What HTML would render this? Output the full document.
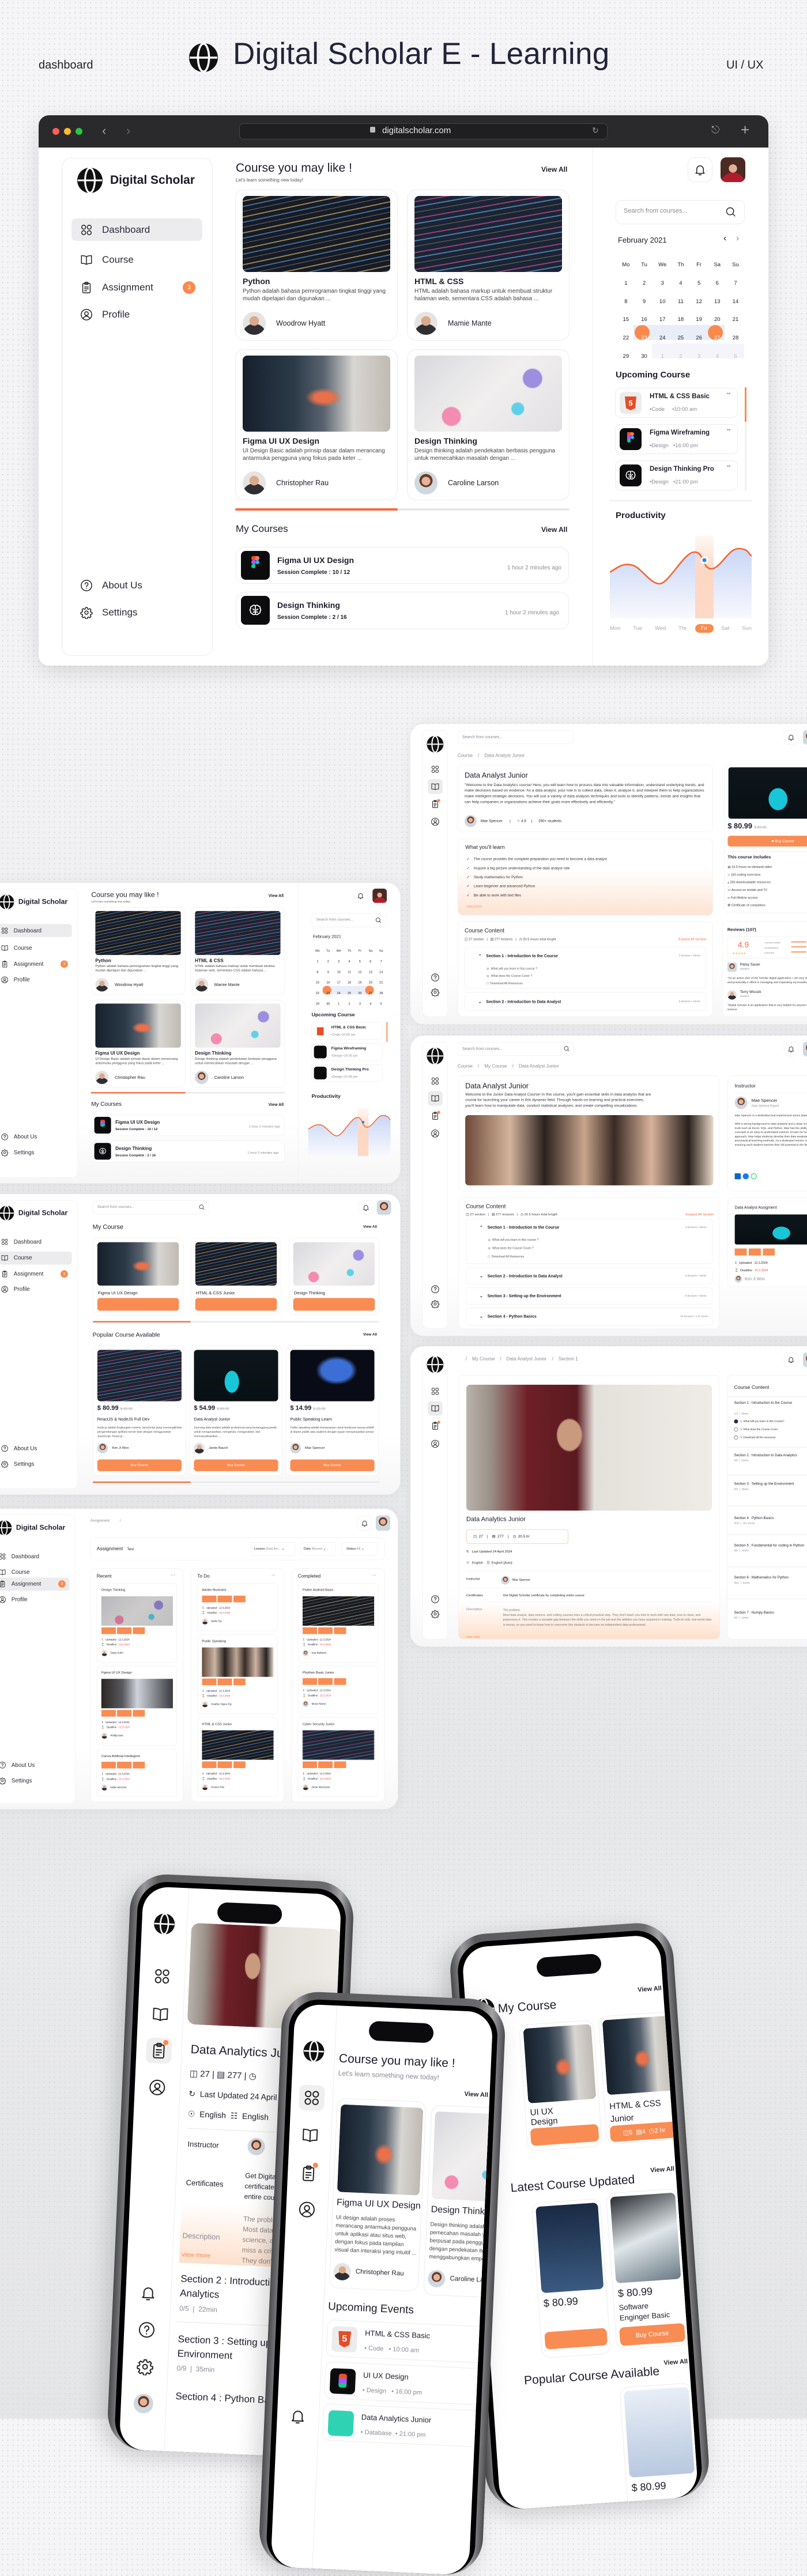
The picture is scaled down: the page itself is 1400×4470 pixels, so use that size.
<!DOCTYPE html>
<html><head><meta charset="utf-8">
<style>
*{box-sizing:border-box;margin:0;padding:0}
body{width:1400px;height:4197px;overflow:hidden;position:relative;font-family:"Liberation Sans",sans-serif;color:#1d1d2b;
background:radial-gradient(circle,#d9dadd 1px,transparent 1.3px) 0 0/9px 9px,linear-gradient(180deg,#f5f5f7 0,#f3f3f5 1200px,#ebebed 2000px,#e6e7e9 3100px,#e9eaec 3300px,#e4e5e7 4197px)}
.a{position:absolute}
.scr{position:absolute;width:1266px;height:899px;background:linear-gradient(180deg,#fff 0,#fff 80%,#f6f6f7 100%);border-radius:40px;overflow:hidden;transform:scale(.58);transform-origin:0 0;box-shadow:0 0 40px rgba(0,0,0,.06)}
.card{position:absolute;border:1.5px solid #ececef;border-radius:16px;background:#fff}
svg.i{position:absolute;fill:none;stroke:#222;stroke-width:1.6;stroke-linecap:round;stroke-linejoin:round}
.nav{position:absolute;font-size:17px;color:#2a2a36}
.code{background:repeating-linear-gradient(168deg,transparent 0 8px,rgba(240,200,110,.6) 8px 10px,transparent 10px 17px,rgba(110,190,255,.5) 17px 19px,transparent 19px 26px,rgba(255,255,255,.35) 26px 27px),#161b26}
.code2{background:repeating-linear-gradient(170deg,transparent 0 9px,rgba(230,90,150,.6) 9px 11px,transparent 11px 18px,rgba(120,200,255,.55) 18px 20px,transparent 20px 28px,rgba(240,230,120,.4) 28px 29px),#1b2436}
.ux{background:radial-gradient(ellipse at 55% 55%,#e8704a 0 8%,transparent 16%),linear-gradient(90deg,#16202c 0,#2c3a48 35%,#5a6470 55%,#d8d6d2 75%,#bfbab2 100%)}
.dt{background:radial-gradient(circle at 80% 30%,#9d8ee0 0 7%,transparent 8%),radial-gradient(circle at 25% 80%,#f48bb0 0 7%,transparent 8%),radial-gradient(circle at 70% 70%,#5fd0e8 0 5%,transparent 6%),linear-gradient(135deg,#d8d8de,#f1efee 50%,#e2e0e4)}
.chart{background:radial-gradient(ellipse 14% 35% at 45% 62%,#18c6d8 0 60%,transparent 62%),linear-gradient(180deg,#0d161b,#081014)}
.ppl{background:linear-gradient(90deg,#6d4a38 0,#d4b49c 18%,#2b221e 32%,#c9a48c 48%,#3a2a24 60%,#d8b29a 75%,#2a201c 90%,#e8d8c8 100%)}
.man{background:radial-gradient(ellipse 12% 30% at 42% 40%,#c99a7e 0 40%,transparent 45%),linear-gradient(90deg,#b9b3ab 0,#9a9088 10%,#6e1f26 25%,#5a1a20 45%,#e4e0da 52%,#efebe6 100%)}
.spk{background:radial-gradient(ellipse 35% 40% at 55% 40%,#3c6fd6 0 50%,transparent 70%),#090c16}
.av{position:absolute;border-radius:50%;background:radial-gradient(circle at 50% 40%,#d9a98a 0 26%,transparent 27%),radial-gradient(circle at 50% 105%,#2e2e33 0 45%,transparent 46%),#e6e3e0}
.avf{position:absolute;border-radius:50%;background:radial-gradient(circle at 50% 42%,#e3b49a 0 24%,transparent 25%),radial-gradient(circle at 50% 40%,#6a3a26 0 36%,transparent 37%),#cfd8de}
.btn{position:absolute;background:#f98c52;border-radius:8px;color:#fff;text-align:center}
.g{color:#8a8a96}
.phone{position:absolute;width:388px;height:1000px;border-radius:64px;background:linear-gradient(90deg,#4a4a4d,#9a9a9e 6%,#5b5b5e 12%,#6b6b6e 88%,#a5a5a8 94%,#4a4a4d);padding:13px;box-shadow:-10px 10px 40px rgba(0,0,0,.18)}
.phone .in{position:absolute;left:13px;top:13px;right:13px;bottom:0;background:#000;border-radius:52px;padding:9px}
.phone .sc{position:absolute;left:9px;top:9px;right:9px;bottom:0;background:#fff;border-radius:44px;overflow:hidden}
.notch{position:absolute;width:112px;height:34px;background:#0b0b0d;border-radius:18px}
</style></head><body>
<svg width="0" height="0" style="position:absolute">
<defs>
<symbol id="globe" viewBox="0 0 24 24"><circle cx="12" cy="12" r="12" fill="#111" stroke="none"/><ellipse cx="12" cy="12" rx="4.6" ry="11.6" fill="none" stroke="#fff" stroke-width="1.7"/><path d="M0.5 12H23.5" stroke="#fff" stroke-width="1.7"/></symbol>
<symbol id="grid" viewBox="0 0 24 24"><rect x="3" y="3" width="7.5" height="7.5" rx="3.7"/><rect x="13.5" y="3" width="7.5" height="7.5" rx="3.7"/><rect x="3" y="13.5" width="7.5" height="7.5" rx="3.7"/><rect x="13.5" y="13.5" width="7.5" height="7.5" rx="3.7"/></symbol>
<symbol id="book" viewBox="0 0 24 24"><path d="M12 6C10 4.6 7 4 2.5 4v14.5c4.5 0 7.5.5 9.5 2 2-1.5 5-2 9.5-2V4C17 4 14 4.6 12 6zM12 6v14.5"/></symbol>
<symbol id="clip" viewBox="0 0 24 24"><rect x="5" y="4" width="14" height="18" rx="2"/><rect x="9" y="2" width="6" height="4" rx="1"/><path d="M8.5 11h7M8.5 14.5h7M8.5 18h4"/></symbol>
<symbol id="user" viewBox="0 0 24 24"><circle cx="12" cy="12" r="10"/><circle cx="12" cy="10" r="3.5"/><path d="M5.8 19.2c1.6-2.8 3.8-4.2 6.2-4.2s4.6 1.4 6.2 4.2"/></symbol>
<symbol id="help" viewBox="0 0 24 24"><circle cx="12" cy="12" r="10"/><path d="M9.3 9.4a2.8 2.8 0 1 1 3.9 2.6c-.8.4-1.2 1-1.2 1.8v.7"/><path d="M12 17.4v.2"/></symbol>
<symbol id="gear" viewBox="0 0 24 24"><path d="M10.3 2.5h3.4l.5 2.6 1.9.8 2.2-1.5 2.4 2.4-1.5 2.2.8 1.9 2.6.5v3.4l-2.6.5-.8 1.9 1.5 2.2-2.4 2.4-2.2-1.5-1.9.8-.5 2.6h-3.4l-.5-2.6-1.9-.8-2.2 1.5-2.4-2.4 1.5-2.2-.8-1.9-2.6-.5v-3.4l2.6-.5.8-1.9-1.5-2.2 2.4-2.4 2.2 1.5 1.9-.8z"/><circle cx="12" cy="12" r="3.2"/></symbol>
<symbol id="bell" viewBox="0 0 24 24"><path d="M6 16.5V11a6 6 0 0 1 12 0v5.5l1.6 2H4.4zM10 21.2h4"/></symbol>
<symbol id="search" viewBox="0 0 24 24"><circle cx="11" cy="11" r="7"/><path d="M16.2 16.2L20.5 20.5"/></symbol>
<symbol id="brain" viewBox="0 0 24 24"><path d="M12 5c-1-1.5-4-1.6-5 .4-2 0-3.3 2-2.4 3.6C3 10 3 12.8 4.6 13.8c-.6 1.8.8 3.7 2.6 3.5.6 1.9 3.5 2.2 4.8.7 1.3 1.5 4.2 1.2 4.8-.7 1.8.2 3.2-1.7 2.6-3.5 1.6-1 1.6-3.8 0-4.8.9-1.6-.4-3.6-2.4-3.6-1-2-4-1.9-5-.4zM12 5v13M8 10c1 .3 2 1 2 2M16 10c-1 .3-2 1-2 2M8.5 15c1-.3 2-.3 3.5 0M15.5 15c-1-.3-2-.3-3.5 0"/></symbol>
</defs></svg>

<!-- Header -->
<div class="a" style="left:67px;top:102px;font-size:20px;color:#222">dashboard</div>
<svg class="a" style="left:328px;top:75px;width:50px;height:50px"><use href="#globe"/></svg>
<div class="a" style="left:404px;top:63px;font-size:53px;color:#23233a;letter-spacing:0.3px">Digital Scholar E - Learning</div>
<div class="a" style="left:1260px;top:102px;font-size:20px;color:#222">UI / UX</div>

<!-- Browser -->
<div class="a" style="left:67px;top:200px;width:1266px;height:955px;border-radius:18px;overflow:hidden;background:#fff;box-shadow:0 10px 40px rgba(0,0,0,.12)">
 <div class="a" style="left:0;top:0;width:1266px;height:56px;background:#2a2a2c"></div>
 <div class="a" style="left:24px;top:22px;width:12px;height:12px;border-radius:50%;background:#ff5f57"></div>
 <div class="a" style="left:44px;top:22px;width:12px;height:12px;border-radius:50%;background:#febc2e"></div>
 <div class="a" style="left:64px;top:22px;width:12px;height:12px;border-radius:50%;background:#28c840"></div>
 <div class="a" style="left:110px;top:14px;color:#aaa;font-size:22px">&#8249;</div>
 <div class="a" style="left:152px;top:14px;color:#666;font-size:22px">&#8250;</div>
 <div class="a" style="left:348px;top:14px;width:639px;height:28px;border-radius:7px;background:#1f1f21;border:1px solid #444"></div>
 <div class="a" style="left:575px;top:20px;width:9px;height:10px;background:#bbb;border-radius:2px"></div>
 <div class="a" style="left:596px;top:18px;color:#e8e8e8;font-size:15px">digitalscholar.com</div>
 <div class="a" style="left:960px;top:18px;color:#999;font-size:14px">&#8635;</div>
 <div class="a" style="left:1167px;top:15px;color:#999;font-size:18px">&#9099;</div>
 <div class="a" style="left:1218px;top:10px;color:#aaa;font-size:26px">+</div>
 <div class="a" style="left:0;top:56px;width:1266px;height:899px">
  <!-- DASH -->
  <div class="a" style="left:0;top:0;width:1266px;height:899px">
   <div class="card" style="left:40px;top:18px;width:262px;height:864px"></div>
   <svg class="a" style="left:67px;top:35px;width:44px;height:44px"><use href="#globe"/></svg>
   <div class="a" style="left:124px;top:45px;font-size:21px;font-weight:bold;color:#1a1a26">Digital Scholar</div>
   <div class="a" style="left:57px;top:123px;width:227px;height:39px;background:#ececee;border-radius:8px"></div>
   <svg class="i" style="left:72px;top:132px;width:22px;height:22px"><use href="#grid"/></svg><div class="nav" style="left:110px;top:133px">Dashboard</div>
   <svg class="i" style="left:72px;top:184px;width:22px;height:22px"><use href="#book"/></svg><div class="nav" style="left:110px;top:185px">Course</div>
   <svg class="i" style="left:72px;top:232px;width:22px;height:22px"><use href="#clip"/></svg><div class="nav" style="left:110px;top:233px">Assignment</div>
   <div class="a" style="left:250px;top:232px;width:22px;height:22px;border-radius:50%;background:#fa8a4c;color:#fff;font-size:11px;text-align:center;line-height:22px">3</div>
   <svg class="i" style="left:72px;top:279px;width:22px;height:22px"><use href="#user"/></svg><div class="nav" style="left:110px;top:280px">Profile</div>
   <svg class="i" style="left:72px;top:749px;width:22px;height:22px"><use href="#help"/></svg><div class="nav" style="left:110px;top:750px">About Us</div>
   <svg class="i" style="left:72px;top:796px;width:22px;height:22px"><use href="#gear"/></svg><div class="nav" style="left:110px;top:797px">Settings</div>

   <div class="a" style="left:342px;top:24px;font-size:21px">Course you may like !</div>
   <div class="a g" style="left:342px;top:52px;font-size:8px;color:#555">Let's learn something new today!</div>
   <div class="a" style="left:872px;top:31px;font-size:12px;font-weight:bold">View All</div>

   <div class="card" style="left:341px;top:73px;width:282px;height:262px">
    <div class="a code" style="left:12px;top:10px;width:256px;height:132px;border-radius:8px"></div>
    <div class="a" style="left:12px;top:150px;font-size:14px;font-weight:bold">Python</div>
    <div class="a" style="left:12px;top:169px;width:258px;font-size:10px;line-height:13px;color:#444">Python adalah bahasa pemrograman tingkat tinggi yang mudah dipelajari dan digunakan ...</div>
    <div class="av" style="left:12px;top:211px;width:40px;height:40px"></div>
    <div class="a" style="left:70px;top:224px;font-size:12.5px">Woodrow Hyatt</div>
   </div>
   <div class="card" style="left:639px;top:73px;width:282px;height:262px">
    <div class="a code2" style="left:12px;top:10px;width:256px;height:132px;border-radius:8px"></div>
    <div class="a" style="left:12px;top:150px;font-size:14px;font-weight:bold">HTML &amp; CSS</div>
    <div class="a" style="left:12px;top:169px;width:258px;font-size:10px;line-height:13px;color:#444">HTML adalah bahasa markup untuk membuat struktur halaman web, sementara CSS adalah bahasa ...</div>
    <div class="av" style="left:12px;top:211px;width:40px;height:40px"></div>
    <div class="a" style="left:70px;top:224px;font-size:12.5px">Mamie Mante</div>
   </div>
   <div class="card" style="left:341px;top:350px;width:282px;height:262px">
    <div class="a ux" style="left:12px;top:10px;width:256px;height:132px;border-radius:8px"></div>
    <div class="a" style="left:12px;top:150px;font-size:14px;font-weight:bold">Figma UI UX Design</div>
    <div class="a" style="left:12px;top:169px;width:258px;font-size:10px;line-height:13px;color:#444">UI Design Basic adalah prinsip dasar dalam merancang antarmuka pengguna yang fokus pada keter ...</div>
    <div class="av" style="left:12px;top:211px;width:40px;height:40px"></div>
    <div class="a" style="left:70px;top:224px;font-size:12.5px">Christopher Rau</div>
   </div>
   <div class="card" style="left:639px;top:350px;width:282px;height:262px">
    <div class="a dt" style="left:12px;top:10px;width:256px;height:132px;border-radius:8px"></div>
    <div class="a" style="left:12px;top:150px;font-size:14px;font-weight:bold">Design Thinking</div>
    <div class="a" style="left:12px;top:169px;width:258px;font-size:10px;line-height:13px;color:#444">Design thinking adalah pendekatan berbasis pengguna untuk memecahkan masalah dengan ...</div>
    <div class="avf" style="left:12px;top:211px;width:40px;height:40px"></div>
    <div class="a" style="left:70px;top:224px;font-size:12.5px">Caroline Larson</div>
   </div>
   <div class="a" style="left:341px;top:626px;width:580px;height:4px;background:#e8e8ea;border-radius:2px"></div>
   <div class="a" style="left:341px;top:626px;width:282px;height:4px;background:#f56b3d;border-radius:2px"></div>
   <div class="a" style="left:342px;top:652px;font-size:17px">My Courses</div>
   <div class="a" style="left:872px;top:656px;font-size:12px;font-weight:bold">View All</div>
   <div class="card" style="left:342px;top:693px;width:578px;height:64px">
    <div class="a" style="left:8px;top:6px;width:50px;height:50px;border-radius:8px;background:#0c0c0e"></div>
    <div class="a" style="left:26px;top:15px;width:7px;height:7px;background:#f24e1e;border-radius:3px 0 0 3px"></div><div class="a" style="left:33px;top:15px;width:7px;height:7px;background:#ff7262;border-radius:0 3px 3px 0"></div>
    <div class="a" style="left:26px;top:22px;width:7px;height:7px;background:#a259ff;border-radius:3px 0 0 3px"></div><div class="a" style="left:33px;top:22px;width:7px;height:7px;background:#1abcfe;border-radius:50%"></div>
    <div class="a" style="left:26px;top:29px;width:7px;height:7px;background:#0acf83;border-radius:3px 0 3px 3px"></div>
    <div class="a" style="left:71px;top:14px;font-size:14px;font-weight:bold">Figma UI UX Design</div>
    <div class="a" style="left:71px;top:38px;font-size:10px;font-weight:bold">Session Complete : 10 / 12</div>
    <div class="a g" style="left:470px;top:30px;font-size:10px">1 hour 2 minutes ago</div>
   </div>
   <div class="card" style="left:342px;top:771px;width:578px;height:65px">
    <div class="a" style="left:8px;top:6px;width:50px;height:50px;border-radius:8px;background:#0c0c0e"></div>
    <svg class="i" style="left:20px;top:18px;width:26px;height:26px;stroke:#fff"><use href="#brain"/></svg>
    <div class="a" style="left:71px;top:14px;font-size:14px;font-weight:bold">Design Thinking</div>
    <div class="a" style="left:71px;top:38px;font-size:10px;font-weight:bold">Session Complete : 2 / 16</div>
    <div class="a g" style="left:466px;top:30px;font-size:10px">1 hour 2 minutes ago</div>
   </div>
   <div class="a" style="left:961px;top:0;width:1px;height:899px;background:#eee"></div>
   <div class="card" style="left:1126px;top:17px;width:43px;height:43px;border-radius:12px"></div>
   <svg class="i" style="left:1136px;top:27px;width:23px;height:23px"><use href="#bell"/></svg>
   <div class="avf" style="left:1183px;top:17px;width:43px;height:43px;border-radius:10px;background:radial-gradient(circle at 50% 45%,#e0b098 0 22%,transparent 23%),radial-gradient(circle at 50% 110%,#b11c2c 0 40%,transparent 41%),#4a2a22"></div>
   <div class="card" style="left:1001px;top:91px;width:224px;height:42px;border-radius:10px"></div>
   <div class="a g" style="left:1015px;top:104px;font-size:11px">Search from courses...</div>
   <svg class="i" style="left:1190px;top:101px;width:21px;height:21px"><use href="#search"/></svg>
   <div class="a" style="left:1005px;top:153px;font-size:13px">February 2021</div>
   <div class="a" style="left:1188px;top:149px;font-size:16px">&#8249;</div><div class="a g" style="left:1210px;top:149px;font-size:16px">&#8250;</div>
   <div class="a" style="left:1032px;top:308px;width:158px;height:26px;background:#e9edf8"></div>
   <div class="a" style="left:1064px;top:340px;width:160px;height:26px;background:#f4f5fa"></div>
   <div class="a" style="left:1034px;top:308px;width:26px;height:26px;border-radius:50%;background:#fa8a4c"></div>
   <div class="a" style="left:1161px;top:308px;width:26px;height:26px;border-radius:50%;background:#fa8a4c"></div>
   <div class="a" style="left:1003px;top:188px;width:222px;font-size:9.5px;line-height:31.8px;display:grid;grid-template-columns:repeat(7,31.7px);text-align:center">
    <span>Mo</span><span>Tu</span><span>We</span><span>Th</span><span>Fr</span><span>Sa</span><span>Su</span>
    <span>1</span><span>2</span><span>3</span><span>4</span><span>5</span><span>6</span><span>7</span>
    <span>8</span><span>9</span><span>10</span><span>11</span><span>12</span><span>13</span><span>14</span>
    <span>15</span><span>16</span><span>17</span><span>18</span><span>19</span><span>20</span><span>21</span>
    <span>22</span><span style="color:#fff">23</span><span>24</span><span>25</span><span>26</span><span style="color:#fff">27</span><span>28</span>
    <span>29</span><span>30</span><span style="color:#bbb">1</span><span style="color:#bbb">2</span><span style="color:#bbb">3</span><span style="color:#bbb">4</span><span style="color:#bbb">5</span>
   </div>
   <div class="a" style="left:1001px;top:386px;font-size:15px;font-weight:bold">Upcoming Course</div>
   <div class="a" style="left:1225px;top:416px;width:3px;height:180px;background:#efefef;border-radius:2px"></div>
   <div class="a" style="left:1225px;top:416px;width:3px;height:60px;background:#fa8a4c;border-radius:2px"></div>
   <div class="card" style="left:1000px;top:417px;width:213px;height:52px;border-radius:10px">
    <div class="a" style="left:7px;top:6px;width:38px;height:38px;border-radius:8px;background:#ececec"></div>
    <div class="a" style="left:16px;top:14px;width:20px;height:24px;background:#e44d26;clip-path:polygon(0 0,100% 0,90% 85%,50% 100%,10% 85%);color:#fff;font-size:13px;font-weight:bold;text-align:center;line-height:24px">5</div>
    <div class="a" style="left:59px;top:8px;font-size:11.5px;font-weight:bold">HTML &amp; CSS Basic</div>
    <div class="a g" style="left:59px;top:31px;font-size:9.5px">&bull;Code &nbsp;&nbsp;&nbsp;&nbsp;&bull;10:00 am</div>
    <div class="a g" style="left:193px;top:4px;font-size:9px">&bull;&bull;</div>
   </div>
   <div class="card" style="left:1000px;top:480px;width:213px;height:52px;border-radius:10px">
    <div class="a" style="left:7px;top:6px;width:38px;height:38px;border-radius:8px;background:#0c0c0e"></div>
    <div class="a" style="left:20px;top:13px;width:6px;height:6px;background:#f24e1e"></div><div class="a" style="left:26px;top:13px;width:6px;height:6px;background:#ff7262;border-radius:0 3px 3px 0"></div>
    <div class="a" style="left:20px;top:19px;width:6px;height:6px;background:#a259ff"></div><div class="a" style="left:26px;top:19px;width:6px;height:6px;background:#1abcfe;border-radius:50%"></div>
    <div class="a" style="left:20px;top:25px;width:6px;height:6px;background:#0acf83;border-radius:0 0 3px 3px"></div>
    <div class="a" style="left:59px;top:8px;font-size:11.5px;font-weight:bold">Figma Wireframing</div>
    <div class="a g" style="left:59px;top:31px;font-size:9.5px">&bull;Design &nbsp;&nbsp;&bull;16:00 pm</div>
    <div class="a g" style="left:193px;top:4px;font-size:9px">&bull;&bull;</div>
   </div>
   <div class="card" style="left:1000px;top:543px;width:213px;height:52px;border-radius:10px">
    <div class="a" style="left:7px;top:6px;width:38px;height:38px;border-radius:8px;background:#0c0c0e"></div>
    <svg class="i" style="left:15px;top:14px;width:22px;height:22px;stroke:#fff"><use href="#brain"/></svg>
    <div class="a" style="left:59px;top:8px;font-size:11.5px;font-weight:bold">Design Thinking Pro</div>
    <div class="a g" style="left:59px;top:31px;font-size:9.5px">&bull;Design &nbsp;&nbsp;&bull;21:00 pm</div>
    <div class="a g" style="left:193px;top:4px;font-size:9px">&bull;&bull;</div>
   </div>
   <div class="a" style="left:991px;top:612px;width:246px;height:2px;background:#eee"></div>
   <div class="a" style="left:1001px;top:630px;font-size:15px;font-weight:bold">Productivity</div>
   <svg class="a" style="left:991px;top:674px;width:246px;height:146px" viewBox="0 -11 246 146">
    <defs><linearGradient id="lg" x1="0" y1="0" x2="0" y2="1"><stop offset="0" stop-color="#c9d6f6"/><stop offset="1" stop-color="#f8f9fd"/></linearGradient>
    <linearGradient id="og" x1="0" y1="0" x2="0" y2="1"><stop offset="0" stop-color="#fde5d8" stop-opacity=".3"/><stop offset=".4" stop-color="#fcd8c4"/><stop offset="1" stop-color="#fdd9c6"/></linearGradient></defs>
    <path d="M0 52C15 42 25 35 40 40S70 72 86 72 128 18 146 17 160 46 176 46 205 11 223 11 240 20 246 24V132H0Z" fill="url(#lg)"/>
    <rect x="148" y="-11" width="32" height="143" fill="url(#og)"/>
    <path d="M0 52C15 42 25 35 40 40S70 72 86 72 128 18 146 17 160 46 176 46 205 11 223 11 240 20 246 24" fill="none" stroke="#f4662e" stroke-width="2.6"/>
    <circle cx="164" cy="31" r="6.5" fill="#fff"/><circle cx="164" cy="31" r="3.5" fill="#2186f5"/>
   </svg>
   <div class="a" style="left:1139px;top:827px;width:32px;height:15px;border-radius:8px;background:#fa8a4c"></div>
   <div class="a g" style="left:991px;top:829px;width:246px;font-size:9.5px;display:flex;justify-content:space-between;color:#aaa"><span>Mon</span><span>Tue</span><span>Wed</span><span>Thr</span><span style="color:#fff">&nbsp;Fri&nbsp;</span><span>Sat</span><span>Sun</span></div>
  </div>
 </div>
</div>

<!-- Screen A: dashboard copy -->
<div class="scr" style="left:-40px;top:1532px">
   <div class="card" style="left:40px;top:18px;width:262px;height:864px"></div>
   <svg class="a" style="left:67px;top:35px;width:44px;height:44px"><use href="#globe"/></svg>
   <div class="a" style="left:124px;top:45px;font-size:21px;font-weight:bold">Digital Scholar</div>
   <div class="a" style="left:40px;top:123px;width:244px;height:39px;background:#ececee;border-radius:0 8px 8px 0"></div>
   <svg class="i" style="left:72px;top:132px;width:22px;height:22px"><use href="#grid"/></svg><div class="nav" style="left:110px;top:133px">Dashboard</div>
   <svg class="i" style="left:72px;top:184px;width:22px;height:22px"><use href="#book"/></svg><div class="nav" style="left:110px;top:185px">Course</div>
   <svg class="i" style="left:72px;top:232px;width:22px;height:22px"><use href="#clip"/></svg><div class="nav" style="left:110px;top:233px">Assignment</div>
   <div class="a" style="left:250px;top:232px;width:22px;height:22px;border-radius:50%;background:#fa8a4c;color:#fff;font-size:11px;text-align:center;line-height:22px">3</div>
   <svg class="i" style="left:72px;top:279px;width:22px;height:22px"><use href="#user"/></svg><div class="nav" style="left:110px;top:280px">Profile</div>
   <svg class="i" style="left:72px;top:749px;width:22px;height:22px"><use href="#help"/></svg><div class="nav" style="left:110px;top:750px">About Us</div>
   <svg class="i" style="left:72px;top:796px;width:22px;height:22px"><use href="#gear"/></svg><div class="nav" style="left:110px;top:797px">Settings</div>
   <div class="a" style="left:342px;top:24px;font-size:21px">Course you may like !</div>
   <div class="a" style="left:342px;top:52px;font-size:8px;color:#555">Let's learn something new today!</div>
   <div class="a" style="left:872px;top:31px;font-size:12px;font-weight:bold">View All</div>
   <div class="card" style="left:341px;top:73px;width:282px;height:262px"><div class="a code" style="left:12px;top:10px;width:256px;height:132px;border-radius:8px"></div><div class="a" style="left:12px;top:150px;font-size:14px;font-weight:bold">Python</div><div class="a" style="left:12px;top:169px;width:258px;font-size:10px;line-height:13px;color:#444">Python adalah bahasa pemrograman tingkat tinggi yang mudah dipelajari dan digunakan ...</div><div class="av" style="left:12px;top:211px;width:40px;height:40px"></div><div class="a" style="left:70px;top:224px;font-size:12.5px">Woodrow Hyatt</div></div>
   <div class="card" style="left:639px;top:73px;width:282px;height:262px"><div class="a code2" style="left:12px;top:10px;width:256px;height:132px;border-radius:8px"></div><div class="a" style="left:12px;top:150px;font-size:14px;font-weight:bold">HTML &amp; CSS</div><div class="a" style="left:12px;top:169px;width:258px;font-size:10px;line-height:13px;color:#444">HTML adalah bahasa markup untuk membuat struktur halaman web, sementara CSS adalah bahasa ...</div><div class="av" style="left:12px;top:211px;width:40px;height:40px"></div><div class="a" style="left:70px;top:224px;font-size:12.5px">Mamie Mante</div></div>
   <div class="card" style="left:341px;top:350px;width:282px;height:262px"><div class="a ux" style="left:12px;top:10px;width:256px;height:132px;border-radius:8px"></div><div class="a" style="left:12px;top:150px;font-size:14px;font-weight:bold">Figma UI UX Design</div><div class="a" style="left:12px;top:169px;width:258px;font-size:10px;line-height:13px;color:#444">UI Design Basic adalah prinsip dasar dalam merancang antarmuka pengguna yang fokus pada keter ...</div><div class="av" style="left:12px;top:211px;width:40px;height:40px"></div><div class="a" style="left:70px;top:224px;font-size:12.5px">Christopher Rau</div></div>
   <div class="card" style="left:639px;top:350px;width:282px;height:262px"><div class="a dt" style="left:12px;top:10px;width:256px;height:132px;border-radius:8px"></div><div class="a" style="left:12px;top:150px;font-size:14px;font-weight:bold">Design Thinking</div><div class="a" style="left:12px;top:169px;width:258px;font-size:10px;line-height:13px;color:#444">Design thinking adalah pendekatan berbasis pengguna untuk memecahkan masalah dengan ...</div><div class="avf" style="left:12px;top:211px;width:40px;height:40px"></div><div class="a" style="left:70px;top:224px;font-size:12.5px">Caroline Larson</div></div>
   <div class="a" style="left:341px;top:626px;width:580px;height:4px;background:#e8e8ea"></div><div class="a" style="left:341px;top:626px;width:282px;height:4px;background:#f56b3d"></div>
   <div class="a" style="left:342px;top:652px;font-size:17px">My Courses</div><div class="a" style="left:872px;top:656px;font-size:12px;font-weight:bold">View All</div>
   <div class="card" style="left:342px;top:693px;width:578px;height:64px"><div class="a" style="left:8px;top:6px;width:50px;height:50px;border-radius:8px;background:#0c0c0e"></div><div class="a" style="left:26px;top:15px;width:14px;height:20px;background:linear-gradient(#f24e1e 0 33%,#a259ff 33% 66%,#0acf83 66%);border-radius:4px"></div><div class="a" style="left:71px;top:14px;font-size:14px;font-weight:bold">Figma UI UX Design</div><div class="a" style="left:71px;top:38px;font-size:10px;font-weight:bold">Session Complete : 10 / 12</div><div class="a g" style="left:470px;top:30px;font-size:10px">1 hour 2 minutes ago</div></div>
   <div class="card" style="left:342px;top:771px;width:578px;height:65px"><div class="a" style="left:8px;top:6px;width:50px;height:50px;border-radius:8px;background:#0c0c0e"></div><svg class="i" style="left:20px;top:18px;width:26px;height:26px;stroke:#fff"><use href="#brain"/></svg><div class="a" style="left:71px;top:14px;font-size:14px;font-weight:bold">Design Thinking</div><div class="a" style="left:71px;top:38px;font-size:10px;font-weight:bold">Session Complete : 2 / 16</div><div class="a g" style="left:466px;top:30px;font-size:10px">1 hour 2 minutes ago</div></div>
   <div class="a" style="left:961px;top:0;width:1px;height:899px;background:#eee"></div>
   <div class="card" style="left:1126px;top:17px;width:43px;height:43px;border-radius:12px"></div><svg class="i" style="left:1136px;top:27px;width:23px;height:23px"><use href="#bell"/></svg>
   <div class="avf" style="left:1183px;top:17px;width:43px;height:43px;border-radius:10px;background:radial-gradient(circle at 50% 45%,#e0b098 0 22%,transparent 23%),radial-gradient(circle at 50% 110%,#b11c2c 0 40%,transparent 41%),#4a2a22"></div>
   <div class="card" style="left:1001px;top:91px;width:224px;height:42px;border-radius:10px"></div><div class="a g" style="left:1015px;top:104px;font-size:11px">Search from courses...</div><svg class="i" style="left:1190px;top:101px;width:21px;height:21px"><use href="#search"/></svg>
   <div class="a" style="left:1005px;top:153px;font-size:13px">February 2021</div>
   <div class="a" style="left:1032px;top:308px;width:158px;height:26px;background:#e9edf8"></div>
   <div class="a" style="left:1034px;top:308px;width:26px;height:26px;border-radius:50%;background:#fa8a4c"></div><div class="a" style="left:1161px;top:308px;width:26px;height:26px;border-radius:50%;background:#fa8a4c"></div>
   <div class="a" style="left:1003px;top:188px;width:222px;font-size:9.5px;line-height:31.8px;display:grid;grid-template-columns:repeat(7,31.7px);text-align:center"><span>Mo</span><span>Tu</span><span>We</span><span>Th</span><span>Fr</span><span>Sa</span><span>Su</span><span>1</span><span>2</span><span>3</span><span>4</span><span>5</span><span>6</span><span>7</span><span>8</span><span>9</span><span>10</span><span>11</span><span>12</span><span>13</span><span>14</span><span>15</span><span>16</span><span>17</span><span>18</span><span>19</span><span>20</span><span>21</span><span>22</span><span>23</span><span>24</span><span>25</span><span>26</span><span>27</span><span>28</span><span>29</span><span>30</span><span>1</span><span>2</span><span>3</span><span>4</span><span>5</span></div>
   <div class="a" style="left:1001px;top:386px;font-size:15px;font-weight:bold">Upcoming Course</div>
   <div class="a" style="left:1225px;top:416px;width:3px;height:60px;background:#fa8a4c"></div>
   <div class="card" style="left:1000px;top:417px;width:213px;height:52px;border-radius:10px"><div class="a" style="left:16px;top:14px;width:20px;height:24px;background:#e44d26"></div><div class="a" style="left:59px;top:8px;font-size:11.5px;font-weight:bold">HTML &amp; CSS Basic</div><div class="a g" style="left:59px;top:31px;font-size:9.5px">&bull;Code &bull;10:00 am</div></div>
   <div class="card" style="left:1000px;top:480px;width:213px;height:52px;border-radius:10px"><div class="a" style="left:7px;top:6px;width:38px;height:38px;border-radius:8px;background:#0c0c0e"></div><div class="a" style="left:59px;top:8px;font-size:11.5px;font-weight:bold">Figma Wireframing</div><div class="a g" style="left:59px;top:31px;font-size:9.5px">&bull;Design &bull;16:00 pm</div></div>
   <div class="card" style="left:1000px;top:543px;width:213px;height:52px;border-radius:10px"><div class="a" style="left:7px;top:6px;width:38px;height:38px;border-radius:8px;background:#0c0c0e"></div><div class="a" style="left:59px;top:8px;font-size:11.5px;font-weight:bold">Design Thinking Pro</div><div class="a g" style="left:59px;top:31px;font-size:9.5px">&bull;Design &bull;21:00 pm</div></div>
   <div class="a" style="left:1001px;top:630px;font-size:15px;font-weight:bold">Productivity</div>
   <svg class="a" style="left:991px;top:674px;width:246px;height:146px" viewBox="0 -11 246 146"><path d="M0 52C15 42 25 35 40 40S70 72 86 72 128 18 146 17 160 46 176 46 205 11 223 11 240 20 246 24V132H0Z" fill="url(#lg)"/><rect x="148" y="-11" width="32" height="143" fill="url(#og)"/><path d="M0 52C15 42 25 35 40 40S70 72 86 72 128 18 146 17 160 46 176 46 205 11 223 11 240 20 246 24" fill="none" stroke="#f4662e" stroke-width="2.6"/><circle cx="164" cy="31" r="4" fill="#2186f5"/></svg>
</div>

<!-- Screen B: course detail -->
<div class="scr" style="left:712px;top:1256px">
 <div class="card" style="left:36px;top:19px;width:76px;height:858px"></div>
 <svg class="a" style="left:49px;top:36px;width:50px;height:50px"><use href="#globe"/></svg>
 <svg class="i" style="left:61px;top:123px;width:26px;height:26px"><use href="#grid"/></svg>
 <div class="a" style="left:52px;top:166px;width:44px;height:44px;border-radius:10px;background:#ececee"></div>
 <svg class="i" style="left:61px;top:175px;width:26px;height:26px"><use href="#book"/></svg>
 <svg class="i" style="left:61px;top:227px;width:26px;height:26px"><use href="#clip"/></svg><div class="a" style="left:80px;top:225px;width:9px;height:9px;border-radius:50%;background:#fa8a4c"></div>
 <svg class="i" style="left:61px;top:280px;width:26px;height:26px"><use href="#user"/></svg>
 <svg class="i" style="left:61px;top:746px;width:26px;height:26px"><use href="#help"/></svg>
 <svg class="i" style="left:61px;top:790px;width:26px;height:26px"><use href="#gear"/></svg>
 <div class="card" style="left:141px;top:19px;width:347px;height:41px;border-radius:10px"></div>
 <div class="a g" style="left:155px;top:32px;font-size:12px">Search from courses...</div>
 <div class="card" style="left:1117px;top:19px;width:43px;height:43px;border-radius:12px"></div><svg class="i" style="left:1127px;top:29px;width:23px;height:23px"><use href="#bell"/></svg>
 <div class="avf" style="left:1174px;top:19px;width:43px;height:43px;border-radius:10px"></div>
 <div class="a g" style="left:141px;top:86px;font-size:14px">Course &nbsp;&nbsp;&nbsp;/ &nbsp;&nbsp;&nbsp;Data Analyst Junior</div>
 <div class="card" style="left:141px;top:122px;width:764px;height:202px">
  <div class="a" style="left:20px;top:18px;font-size:22px">Data Analyst Junior</div>
  <div class="a" style="left:20px;top:52px;width:720px;font-size:11.5px;line-height:17px;color:#333">"Welcome to the Data Analytics course! Here, you will learn how to process data into valuable information, understand underlying trends, and make decisions based on evidence. As a data analyst, your role is to collect data, clean it, analyze it, and interpret them to help organizations make intelligent strategic decisions. You will use a variety of data analysis techniques and tools to identify patterns, trends and insights that can help companies or organizations achieve their goals more effectively and efficiently."</div>
  <div class="avf" style="left:20px;top:150px;width:36px;height:36px"></div>
  <div class="a" style="left:68px;top:161px;font-size:11px">Mae Spencer &nbsp;&nbsp;&nbsp;&nbsp;&nbsp;&nbsp;|&nbsp;&nbsp;&nbsp;&nbsp;&nbsp; &#9734; 4.9 &nbsp;&nbsp;&nbsp;&nbsp;|&nbsp;&nbsp;&nbsp;&nbsp;&nbsp; 250+ students</div>
 </div>
 <div class="card" style="left:141px;top:343px;width:764px;height:230px;background:linear-gradient(180deg,#fff 40%,#fde3d3 100%)">
  <div class="a" style="left:22px;top:17px;font-size:16px">What you'll learn</div>
  <div class="a" style="left:26px;top:48px;font-size:11px;line-height:27px;color:#333">&#10003;&nbsp;&nbsp;&nbsp; The course provides the complete preparation you need to become a data analyst<br>&#10003;&nbsp;&nbsp;&nbsp; Acquire a big picture understanding of the data analyst role<br>&#10003;&nbsp;&nbsp;&nbsp; Study mathematics for Python<br>&#10003;&nbsp;&nbsp;&nbsp; Learn beginner and advanced Python<br>&#10003;&nbsp;&nbsp;&nbsp; Be able to work with text files</div>
  <div class="a" style="left:26px;top:197px;font-size:10px;color:#fa8a4c">view more</div>
 </div>
 <div class="card" style="left:141px;top:591px;width:764px;height:286px">
  <div class="a" style="left:20px;top:17px;font-size:17px">Course Content</div>
  <div class="a" style="left:20px;top:47px;font-size:10px;color:#444">&#9707; 27 section &nbsp;&nbsp;|&nbsp;&nbsp; &#9636; 277 lectures &nbsp;&nbsp;|&nbsp;&nbsp; &#9719; 20.5 hours total lenght</div>
  <div class="a" style="left:660px;top:47px;font-size:10px;color:#f56b3d">Expand All Section</div>
  <div class="card" style="left:20px;top:76px;width:722px;height:124px;border-radius:10px">
   <div class="a" style="left:40px;top:18px;font-size:12px;font-weight:bold">&#8963;&nbsp;&nbsp;&nbsp; Section 1 - Introduction to the Course</div>
   <div class="a g" style="left:640px;top:20px;font-size:8px">3 lectures &bull; 30min</div>
   <div class="a" style="left:65px;top:52px;font-size:9px;line-height:22px;color:#555">&#9678;&nbsp; What will you learn in this course ?<br>&#9678;&nbsp; What does the Course Cover ?<br>&#9633;&nbsp; Download All Resources</div>
  </div>
  <div class="card" style="left:20px;top:211px;width:722px;height:56px;border-radius:10px">
   <div class="a" style="left:40px;top:20px;font-size:12px;font-weight:bold">&#8964;&nbsp;&nbsp;&nbsp; Section 2 - Introduction to Data Analyst</div>
   <div class="a g" style="left:640px;top:22px;font-size:8px">5 lectures &bull; 22min</div>
  </div>
 </div>
 <div class="card" style="left:938px;top:120px;width:340px;height:446px">
  <div class="a chart" style="left:12px;top:9px;width:330px;height:154px;border-radius:8px"></div>
  <div class="a" style="left:10px;top:172px;font-size:22px;font-weight:bold">$ 80.99 <span style="font-size:11px;color:#aaa;text-decoration:line-through;font-weight:normal">$ 89.00</span></div>
  <div class="btn" style="left:10px;top:214px;width:330px;height:32px;line-height:32px;font-size:11px">&#9632; Buy Course</div>
  <div class="a" style="left:10px;top:260px;width:330px;height:1px;background:#e5e5e5"></div>
  <div class="a" style="left:10px;top:270px;font-size:13px;font-weight:bold">This course includes</div>
  <div class="a" style="left:10px;top:296px;font-size:9.5px;line-height:23px;color:#333">&#9636; 16.5 hours on-demand video<br>&lsaquo;&rsaquo; 160 coding exercises<br>&#10515; 250 downloadable resources<br>&#9645; Access on mobile and TV<br>&#8734; Full lifetime access<br>&#10026; Certificate of completion</div>
 </div>
 <div class="card" style="left:933px;top:591px;width:345px;height:286px">
  <div class="a" style="left:14px;top:16px;font-size:13px;font-weight:bold">Reviews (107)</div>
  <div class="a" style="left:280px;top:18px;font-size:10px;color:#f56b3d">view more</div>
  <div class="card" style="left:14px;top:45px;width:330px;height:64px;border-radius:10px">
   <div class="a" style="left:30px;top:10px;font-size:24px;color:#f56b3d">4.9</div>
   <div class="a" style="left:14px;top:44px;font-size:9px;color:#f7b500">&#9733;&#9733;&#9733;&#9733;&#9733;</div>
   <div class="a g" style="left:110px;top:10px;font-size:7px;line-height:15px">Communication<br>Qualifications<br>Expertise</div>
   <div class="a" style="left:190px;top:13px;width:45px;height:3px;background:#f98c52;box-shadow:0 15px 0 #f98c52,0 30px 0 #f98c52"></div>
  </div>
  <div class="avf" style="left:14px;top:122px;width:28px;height:28px;border-radius:6px"></div>
  <div class="a" style="left:52px;top:122px;font-size:11px">Patsy Sauer<br><span class="g" style="font-size:8px">student</span></div>
  <div class="a" style="left:14px;top:162px;width:330px;font-size:8.5px;line-height:13px;color:#333">"As an active user of the Scholar digital application, I am very impressed with the ease and practicality it offers in managing and expanding my knowledge</div>
  <div class="av" style="left:14px;top:205px;width:28px;height:28px"></div>
  <div class="a" style="left:52px;top:204px;font-size:11px">Terry Wisozk<br><span class="g" style="font-size:8px">student</span></div>
  <div class="a" style="left:14px;top:243px;width:330px;font-size:8.5px;line-height:13px;color:#333">"Digital Scholar is an application that is very helpful for anyone interested in studying science</div>
 </div>
</div>

<!-- Screen C -->
<div class="scr" style="left:712px;top:1797px">
 <div class="card" style="left:36px;top:19px;width:76px;height:858px"></div>
 <svg class="a" style="left:49px;top:36px;width:50px;height:50px"><use href="#globe"/></svg>
 <svg class="i" style="left:61px;top:123px;width:26px;height:26px"><use href="#grid"/></svg>
 <div class="a" style="left:52px;top:166px;width:44px;height:44px;border-radius:10px;background:#ececee"></div>
 <svg class="i" style="left:61px;top:175px;width:26px;height:26px"><use href="#book"/></svg>
 <svg class="i" style="left:61px;top:227px;width:26px;height:26px"><use href="#clip"/></svg><div class="a" style="left:80px;top:225px;width:9px;height:9px;border-radius:50%;background:#fa8a4c"></div>
 <svg class="i" style="left:61px;top:280px;width:26px;height:26px"><use href="#user"/></svg>
 <svg class="i" style="left:61px;top:746px;width:26px;height:26px"><use href="#help"/></svg>
 <svg class="i" style="left:61px;top:790px;width:26px;height:26px"><use href="#gear"/></svg>
 <div class="card" style="left:141px;top:19px;width:347px;height:41px;border-radius:10px"></div>
 <div class="a g" style="left:155px;top:32px;font-size:12px">Search from courses...</div>
 <svg class="i" style="left:457px;top:29px;width:20px;height:20px"><use href="#search"/></svg>
 <div class="card" style="left:1117px;top:19px;width:43px;height:43px;border-radius:12px"></div><svg class="i" style="left:1127px;top:29px;width:23px;height:23px"><use href="#bell"/></svg>
 <div class="avf" style="left:1174px;top:19px;width:43px;height:43px;border-radius:10px"></div>
 <div class="a g" style="left:141px;top:83px;font-size:14px">Course &nbsp;&nbsp;&nbsp;/ &nbsp;&nbsp;&nbsp;My Course &nbsp;&nbsp;&nbsp;/ &nbsp;&nbsp;&nbsp;Data Analyst Junior</div>
 <div class="card" style="left:143px;top:119px;width:781px;height:347px">
  <div class="a" style="left:20px;top:18px;font-size:22px">Data Analyst Junior</div>
  <div class="a" style="left:20px;top:48px;width:560px;font-size:11.5px;line-height:17px;color:#333">Welcome to the Junior Data Analyst Course! In this course, you'll gain essential skills in data analysis that are crucial for launching your career in this dynamic field. Through hands-on learning and practical exercises, you'll learn how to manipulate data, conduct statistical analyses, and create compelling visualizations.</div>
  <div class="a ppl" style="left:20px;top:118px;width:742px;height:210px;border-radius:10px"></div>
 </div>
 <div class="card" style="left:949px;top:119px;width:330px;height:347px">
  <div class="a" style="left:20px;top:22px;font-size:15px">Instructor</div>
  <div class="a" style="left:20px;top:50px;width:310px;height:1px;background:#eee"></div>
  <div class="avf" style="left:20px;top:62px;width:38px;height:38px"></div>
  <div class="a" style="left:70px;top:66px;font-size:13px">Mae Spencer<br><i style="font-size:9px" class="g">Data Science Expert</i></div>
  <div class="a" style="left:20px;top:112px;width:310px;font-size:8.5px;line-height:12.5px;color:#333">Mae Spencer is a dedicated and experienced Junior Data Analyst course teacher.<br><br>With a strong background in data analysis and a deep understanding of analytical tools such as Excel, SQL, and Python, Mae has the ability to explain complex concepts in an easy-to-understand manner. Known for her friendly and supportive approach, Mae helps students develop their data analysis skills through interactive and practical teaching methods. As a dedicated mentor, Mae is committed to ensuring each student reaches their full potential in the field of data analysis.</div>
  <div class="a" style="left:20px;top:292px;width:18px;height:18px;background:#0a66c2;border-radius:2px"></div>
  <div class="a" style="left:44px;top:292px;width:18px;height:18px;background:#1877f2;border-radius:50%"></div>
  <div class="a" style="left:68px;top:292px;width:18px;height:18px;border:2px solid #25d366;border-radius:50%"></div>
 </div>
 <div class="card" style="left:143px;top:484px;width:781px;height:394px">
  <div class="a" style="left:22px;top:16px;font-size:17px">Course Content</div>
  <div class="a" style="left:22px;top:45px;font-size:10px;color:#444">&#9707; 27 section &nbsp;&nbsp;|&nbsp;&nbsp; &#9636; 277 lectures &nbsp;&nbsp;|&nbsp;&nbsp; &#9719; 20.5 hours total lenght</div>
  <div class="a" style="left:680px;top:45px;font-size:10px;color:#f56b3d">Expand All Section</div>
  <div class="card" style="left:22px;top:63px;width:738px;height:135px;border-radius:10px">
   <div class="a" style="left:40px;top:18px;font-size:12px;font-weight:bold">&#8963;&nbsp;&nbsp;&nbsp; Section 1 - Introduction to the Course</div>
   <div class="a g" style="left:655px;top:20px;font-size:8px">3 lectures &bull; 30min</div>
   <div class="a" style="left:65px;top:50px;font-size:9px;line-height:25px;color:#555">&#9678;&nbsp; What will you learn in this course ?<br>&#9678;&nbsp; What does the Course Cover ?<br>&#9633;&nbsp; Download All Resources</div>
  </div>
  <div class="card" style="left:22px;top:209px;width:738px;height:50px;border-radius:10px"><div class="a" style="left:40px;top:17px;font-size:12px;font-weight:bold">&#8964;&nbsp;&nbsp;&nbsp; Section 2 - Introduction to Data Analyst</div><div class="a g" style="left:655px;top:19px;font-size:8px">5 lectures &bull; 22min</div></div>
  <div class="card" style="left:22px;top:269px;width:738px;height:50px;border-radius:10px"><div class="a" style="left:40px;top:17px;font-size:12px;font-weight:bold">&#8964;&nbsp;&nbsp;&nbsp; Section 3 - Setting up the Environment</div><div class="a g" style="left:655px;top:19px;font-size:8px">9 lectures &bull; 35min</div></div>
  <div class="card" style="left:22px;top:329px;width:738px;height:53px;border-radius:10px"><div class="a" style="left:40px;top:18px;font-size:12px;font-weight:bold">&#8964;&nbsp;&nbsp;&nbsp; Section 4 - Python Basics</div><div class="a g" style="left:640px;top:20px;font-size:8px">34 lectures &bull; 1 hr 41min</div></div>
 </div>
 <div class="card" style="left:949px;top:484px;width:330px;height:268px">
  <div class="a" style="left:20px;top:22px;font-size:12px">Data Analyst Assigment</div>
  <div class="a chart" style="left:20px;top:50px;width:310px;height:90px;border-radius:6px"></div>
  <div class="a" style="left:20px;top:152px;width:120px;height:21px;background:repeating-linear-gradient(90deg,#f98c52 0 36px,transparent 36px 42px)"></div>
  <div class="a" style="left:20px;top:184px;font-size:9px;line-height:22px">&#8613; &nbsp;Uploaded : 12.3.2024<br>&#8987; &nbsp;Deadline : <span style="color:#f44">15.3.2024</span></div>
  <div class="avf" style="left:20px;top:232px;width:22px;height:22px"></div><div class="a g" style="left:50px;top:236px;font-size:12px">Kim Ji Won</div>
 </div>
</div>

<!-- Screen D -->
<div class="scr" style="left:712px;top:2336px">
 <div class="card" style="left:36px;top:19px;width:76px;height:858px"></div>
 <svg class="a" style="left:49px;top:30px;width:50px;height:50px"><use href="#globe"/></svg>
 <svg class="i" style="left:61px;top:122px;width:26px;height:26px"><use href="#grid"/></svg>
 <div class="a" style="left:52px;top:164px;width:44px;height:44px;border-radius:10px;background:#ececee"></div>
 <svg class="i" style="left:61px;top:173px;width:26px;height:26px"><use href="#book"/></svg>
 <svg class="i" style="left:61px;top:225px;width:26px;height:26px"><use href="#clip"/></svg><div class="a" style="left:80px;top:223px;width:9px;height:9px;border-radius:50%;background:#fa8a4c"></div>
 <svg class="i" style="left:61px;top:279px;width:26px;height:26px"><use href="#user"/></svg>
 <svg class="i" style="left:61px;top:744px;width:26px;height:26px"><use href="#help"/></svg>
 <svg class="i" style="left:61px;top:788px;width:26px;height:26px"><use href="#gear"/></svg>
 <div class="a g" style="left:165px;top:29px;font-size:14px">/ &nbsp;&nbsp;&nbsp;My Course &nbsp;&nbsp;&nbsp;/ &nbsp;&nbsp;&nbsp;Data Analyst Junior &nbsp;&nbsp;&nbsp;/ &nbsp;&nbsp;&nbsp;Section 1</div>
 <div class="card" style="left:1117px;top:19px;width:43px;height:43px;border-radius:12px"></div><svg class="i" style="left:1127px;top:29px;width:23px;height:23px"><use href="#bell"/></svg>
 <div class="avf" style="left:1174px;top:19px;width:43px;height:43px;border-radius:10px"></div>
 <div class="card" style="left:143px;top:86px;width:783px;height:791px;background:linear-gradient(180deg,#fff 86%,#fde0cc 100%)">
  <div class="a man" style="left:23px;top:28px;width:735px;height:377px;border-radius:12px"></div>
  <div class="a" style="left:23px;top:420px;font-size:19px">Data Analytics Junior</div>
  <div class="a" style="left:23px;top:461px;width:305px;height:43px;border:1.5px solid #f9a77c;border-radius:8px;font-size:11px;line-height:40px;padding-left:20px">&#9707; &nbsp;27 &nbsp;&nbsp;&nbsp;| &nbsp;&nbsp;&nbsp;&#9636; &nbsp;277 &nbsp;&nbsp;&nbsp;| &nbsp;&nbsp;&nbsp;&#9719; &nbsp;20.5 hr</div>
  <div class="a" style="left:23px;top:522px;font-size:10px">&#8635; &nbsp;&nbsp;Last Updated 24 April 2024</div>
  <div class="a" style="left:23px;top:556px;font-size:10px">&#9737; &nbsp;&nbsp;English &nbsp;&nbsp;&nbsp;&#9783; &nbsp;English [Auto]</div>
  <div class="a" style="left:23px;top:585px;width:735px;height:1px;background:#eee"></div>
  <div class="a" style="left:23px;top:604px;font-size:10px">Instructor</div>
  <div class="avf" style="left:127px;top:600px;width:26px;height:26px"></div><div class="a" style="left:161px;top:607px;font-size:9px">Mae Spencer</div>
  <div class="a" style="left:23px;top:636px;width:735px;height:1px;background:#eee"></div>
  <div class="a" style="left:23px;top:653px;font-size:10px">Certificates</div>
  <div class="a" style="left:133px;top:653px;font-size:9.5px">Get Digital Schollar certificate by completing entire course</div>
  <div class="a" style="left:23px;top:677px;width:735px;height:1px;background:#eee"></div>
  <div class="a g" style="left:23px;top:695px;font-size:9.5px">Description</div>
  <div class="a" style="left:133px;top:695px;width:625px;font-size:9px;line-height:14.5px;color:#777">The problem<br>Most data analyst, data science, and coding courses miss a critical practical step. They don't teach you how to work with raw data, how to clean, and preprocess it. This creates a sizeable gap between the skills you need on the job and the abilities you have acquired in training. Truth be told, real-world data is messy, so you need to know how to overcome this obstacle to become an independent data professional.</div>
  <div class="a" style="left:23px;top:777px;font-size:9px;color:#fa8a4c">view more</div>
 </div>
 <div class="card" style="left:947px;top:86px;width:330px;height:791px">
  <div class="a" style="left:20px;top:28px;font-size:15px">Course Content</div>
  <div class="a" style="left:0;top:63px;width:330px;height:2px;background:#eee"></div>
  <div class="a" style="left:20px;top:75px;width:290px;font-size:10.5px;line-height:15px">Section 1 : Introduction to the Course</div>
  <div class="a g" style="left:20px;top:110px;font-size:8px">1/3 &nbsp;| &nbsp;30min</div>
  <div class="a" style="left:20px;top:126px;font-size:8px;line-height:24px"><span style="display:inline-block;width:12px;height:12px;border-radius:50%;background:#222a4a;vertical-align:middle"></span>&nbsp;&nbsp;&nbsp;1. What will you learn in this Course?<br><span style="display:inline-block;width:12px;height:12px;border-radius:50%;border:1.5px solid #333;vertical-align:middle"></span>&nbsp;&nbsp;&nbsp;2. What does the Course Cover<br><span style="display:inline-block;width:12px;height:12px;border-radius:50%;border:1.5px solid #333;vertical-align:middle"></span>&nbsp;&nbsp;&nbsp;3. Download all the resources</div>
  <div class="a" style="left:0;top:214px;width:330px;height:2px;background:#eee"></div>
  <div class="a" style="left:20px;top:232px;width:260px;font-size:10.5px;line-height:15px">Section 2 : Introduction to Data Analytics<br><span class="g" style="font-size:8px">0/5 &nbsp;| &nbsp;22min</span></div>
  <div class="a" style="left:0;top:298px;width:330px;height:2px;background:#eee"></div>
  <div class="a" style="left:20px;top:318px;width:260px;font-size:10.5px;line-height:15px">Section 3 : Setting up the Environment<br><span class="g" style="font-size:8px">0/9 &nbsp;| &nbsp;35min</span></div>
  <div class="a" style="left:0;top:390px;width:330px;height:2px;background:#eee"></div>
  <div class="a" style="left:20px;top:420px;width:260px;font-size:10.5px;line-height:15px">Section 4 : Python Basics<br><span class="g" style="font-size:8px">0/34 &nbsp;| &nbsp;1hr 41min</span></div>
  <div class="a" style="left:0;top:476px;width:330px;height:2px;background:#eee"></div>
  <div class="a" style="left:20px;top:502px;width:260px;font-size:10.5px;line-height:15px">Section 5 : Fundamental for coding in Python<br><span class="g" style="font-size:8px">0/6 &nbsp;| &nbsp;32min</span></div>
  <div class="a" style="left:0;top:572px;width:330px;height:2px;background:#eee"></div>
  <div class="a" style="left:20px;top:598px;width:260px;font-size:10.5px;line-height:15px">Section 6 : Mathematics for Python<br><span class="g" style="font-size:8px">0/11 &nbsp;| &nbsp;51min</span></div>
  <div class="a" style="left:0;top:668px;width:330px;height:2px;background:#eee"></div>
  <div class="a" style="left:20px;top:703px;width:260px;font-size:10.5px;line-height:15px">Section 7 : Numpy Basics<br><span class="g" style="font-size:8px">0/5 &nbsp;| &nbsp;14min</span></div>
 </div>
</div>

<!-- Screen E: My course -->
<div class="scr" style="left:-40px;top:2072px">
 <div class="card" style="left:40px;top:18px;width:262px;height:864px"></div>
 <svg class="a" style="left:67px;top:35px;width:44px;height:44px"><use href="#globe"/></svg>
 <div class="a" style="left:124px;top:45px;font-size:21px;font-weight:bold">Digital Scholar</div>
 <svg class="i" style="left:72px;top:132px;width:22px;height:22px"><use href="#grid"/></svg><div class="nav" style="left:110px;top:133px">Dashboard</div>
 <div class="a" style="left:40px;top:172px;width:244px;height:39px;background:#ececee;border-radius:0 8px 8px 0"></div>
 <svg class="i" style="left:72px;top:180px;width:22px;height:22px"><use href="#book"/></svg><div class="nav" style="left:110px;top:181px">Course</div>
 <svg class="i" style="left:72px;top:228px;width:22px;height:22px"><use href="#clip"/></svg><div class="nav" style="left:110px;top:229px">Assignment</div>
 <div class="a" style="left:250px;top:228px;width:22px;height:22px;border-radius:50%;background:#fa8a4c;color:#fff;font-size:11px;text-align:center;line-height:22px">3</div>
 <svg class="i" style="left:72px;top:274px;width:22px;height:22px"><use href="#user"/></svg><div class="nav" style="left:110px;top:275px">Profile</div>
 <svg class="i" style="left:72px;top:750px;width:22px;height:22px"><use href="#help"/></svg><div class="nav" style="left:110px;top:751px">About Us</div>
 <svg class="i" style="left:72px;top:797px;width:22px;height:22px"><use href="#gear"/></svg><div class="nav" style="left:110px;top:798px">Settings</div>
 <div class="card" style="left:346px;top:19px;width:349px;height:41px;border-radius:10px"></div>
 <div class="a g" style="left:360px;top:32px;font-size:11px">Search from courses...</div>
 <svg class="i" style="left:662px;top:29px;width:20px;height:20px"><use href="#search"/></svg>
 <div class="card" style="left:1142px;top:19px;width:43px;height:43px;border-radius:12px"></div><svg class="i" style="left:1152px;top:29px;width:23px;height:23px"><use href="#bell"/></svg>
 <div class="avf" style="left:1196px;top:19px;width:43px;height:43px;border-radius:10px"></div>
 <div class="a" style="left:346px;top:88px;font-size:19px">My Course</div>
 <div class="a" style="left:1155px;top:92px;font-size:11px;font-weight:bold">View All</div>
 <div class="card" style="left:347px;top:131px;width:270px;height:231px"><div class="a ux" style="left:12px;top:12px;width:244px;height:130px;border-radius:10px"></div><div class="a" style="left:14px;top:156px;font-size:13px">Figma UI UX Design</div><div class="btn" style="left:12px;top:179px;width:244px;height:38px"></div></div>
 <div class="card" style="left:640px;top:131px;width:270px;height:231px"><div class="a code" style="left:12px;top:12px;width:244px;height:130px;border-radius:10px"></div><div class="a" style="left:14px;top:156px;font-size:13px">HTML &amp; CSS Junior</div><div class="btn" style="left:12px;top:179px;width:244px;height:38px"></div></div>
 <div class="card" style="left:933px;top:131px;width:270px;height:231px"><div class="a dt" style="left:12px;top:12px;width:244px;height:130px;border-radius:10px"></div><div class="a" style="left:14px;top:156px;font-size:13px">Design Thinking</div><div class="btn" style="left:12px;top:179px;width:244px;height:38px"></div></div>
 <div class="a" style="left:347px;top:380px;width:856px;height:4px;background:#e8e8ea"></div><div class="a" style="left:347px;top:380px;width:292px;height:4px;background:#f56b3d"></div>
 <div class="a" style="left:346px;top:411px;font-size:18px">Popular Course Available</div>
 <div class="a" style="left:1155px;top:414px;font-size:11px;font-weight:bold">View All</div>
 <div class="card" style="left:347px;top:453px;width:278px;height:390px"><div class="a code2" style="left:12px;top:12px;width:252px;height:154px;border-radius:10px"></div><div class="a" style="left:12px;top:176px;font-size:19px;font-weight:bold">$ 80.99 <span style="font-size:11px;color:#aaa;text-decoration:line-through;font-weight:normal">$ 89.00</span></div><div class="a" style="left:12px;top:213px;font-size:12.5px">ReactJS &amp; NodeJS Full Dev</div><div class="a" style="left:12px;top:238px;width:256px;font-size:8.5px;line-height:13px;color:#444">Node.js adalah lingkungan runtime JavaScript yang memungkinkan pengembangan aplikasi server-side dengan menggunakan JavaScript. React.js ...</div><div class="avf" style="left:12px;top:290px;width:32px;height:32px"></div><div class="a" style="left:56px;top:300px;font-size:10px">Kim Ji Won</div><div class="btn" style="left:12px;top:340px;width:252px;height:35px;line-height:35px;font-size:10px">Buy Course</div></div>
 <div class="card" style="left:636px;top:453px;width:278px;height:390px"><div class="a chart" style="left:12px;top:12px;width:252px;height:154px;border-radius:10px"></div><div class="a" style="left:12px;top:176px;font-size:19px;font-weight:bold">$ 54.99 <span style="font-size:11px;color:#aaa;text-decoration:line-through;font-weight:normal">$ 69.00</span></div><div class="a" style="left:12px;top:213px;font-size:12.5px">Data Analyst Junior</div><div class="a" style="left:12px;top:238px;width:256px;font-size:8.5px;line-height:13px;color:#444">Seorang data analyst adalah profesional yang bertanggung jawab untuk mengumpulkan, mengelola, menganalisis, dan memvisualisasikan ...</div><div class="av" style="left:12px;top:290px;width:32px;height:32px"></div><div class="a" style="left:56px;top:300px;font-size:10px">Jamie Bauch</div><div class="btn" style="left:12px;top:340px;width:252px;height:35px;line-height:35px;font-size:10px">Buy Course</div></div>
 <div class="card" style="left:924px;top:453px;width:278px;height:390px"><div class="a spk" style="left:12px;top:12px;width:252px;height:154px;border-radius:10px"></div><div class="a" style="left:12px;top:176px;font-size:19px;font-weight:bold">$ 14.99 <span style="font-size:11px;color:#aaa;text-decoration:line-through;font-weight:normal">$ 29.00</span></div><div class="a" style="left:12px;top:213px;font-size:12.5px">Public Speaking Learn</div><div class="a" style="left:12px;top:238px;width:256px;font-size:8.5px;line-height:13px;color:#444">Public speaking adalah kemampuan untuk berbicara secara efektif di depan publik atau audiens dengan tujuan menyampaikan pesan ...</div><div class="avf" style="left:12px;top:290px;width:32px;height:32px"></div><div class="a" style="left:56px;top:300px;font-size:10px">Mae Spencer</div><div class="btn" style="left:12px;top:340px;width:252px;height:35px;line-height:35px;font-size:10px">Buy Course</div></div>
 <div class="a" style="left:347px;top:860px;width:856px;height:4px;background:#e8e8ea"></div><div class="a" style="left:347px;top:860px;width:292px;height:4px;background:#f56b3d"></div>
</div>

<!-- Screen F: Assignment -->
<div class="scr" style="left:-44px;top:2618px">
 <div class="card" style="left:40px;top:18px;width:262px;height:864px"></div>
 <svg class="a" style="left:67px;top:35px;width:44px;height:44px"><use href="#globe"/></svg>
 <div class="a" style="left:124px;top:45px;font-size:21px;font-weight:bold">Digital Scholar</div>
 <svg class="i" style="left:72px;top:132px;width:22px;height:22px"><use href="#grid"/></svg><div class="nav" style="left:110px;top:133px">Dashboard</div>
 <svg class="i" style="left:72px;top:179px;width:22px;height:22px"><use href="#book"/></svg><div class="nav" style="left:110px;top:180px">Course</div>
 <div class="a" style="left:40px;top:206px;width:244px;height:39px;background:#ececee;border-radius:0 8px 8px 0"></div>
 <svg class="i" style="left:72px;top:214px;width:22px;height:22px"><use href="#clip"/></svg><div class="nav" style="left:110px;top:215px">Assignment</div>
 <div class="a" style="left:250px;top:214px;width:22px;height:22px;border-radius:50%;background:#fa8a4c;color:#fff;font-size:11px;text-align:center;line-height:22px">3</div>
 <svg class="i" style="left:72px;top:261px;width:22px;height:22px"><use href="#user"/></svg><div class="nav" style="left:110px;top:262px">Profile</div>
 <svg class="i" style="left:72px;top:756px;width:22px;height:22px"><use href="#help"/></svg><div class="nav" style="left:110px;top:757px">About Us</div>
 <svg class="i" style="left:72px;top:803px;width:22px;height:22px"><use href="#gear"/></svg><div class="nav" style="left:110px;top:804px">Settings</div>
 <div class="a g" style="left:346px;top:30px;font-size:11px">Assignment &nbsp;&nbsp;&nbsp;&nbsp;&nbsp;&nbsp;&nbsp;&nbsp;&nbsp;/</div>
 <div class="card" style="left:1145px;top:22px;width:43px;height:43px;border-radius:12px"></div><svg class="i" style="left:1155px;top:32px;width:23px;height:23px"><use href="#bell"/></svg>
 <div class="avf" style="left:1200px;top:20px;width:43px;height:46px;border-radius:10px"></div>
 <div class="card" style="left:346px;top:86px;width:881px;height:68px">
  <div class="a" style="left:18px;top:24px;font-size:15px">Assignment &nbsp;&nbsp;<span style="font-size:11px">Test</span></div>
  <div class="card" style="left:480px;top:13px;width:132px;height:40px;border-radius:6px;font-size:10px;line-height:38px;padding-left:8px">Lesson <span class="g">Data An...</span> &#8964;</div>
  <div class="card" style="left:628px;top:13px;width:105px;height:40px;border-radius:6px;font-size:10px;line-height:38px;padding-left:8px">Date <span class="g">Recent</span> &#8964;</div>
  <div class="card" style="left:752px;top:13px;width:105px;height:40px;border-radius:6px;font-size:10px;line-height:38px;padding-left:12px">Status <span class="g">All</span> &#8964;</div>
 </div>
 <div class="card" style="left:346px;top:178px;width:278px;height:700px">
  <div class="a" style="left:18px;top:14px;font-size:14px">Recent</div><div class="a" style="left:240px;top:12px;font-size:12px">&middot;&middot;&middot;</div>
  <div class="card" style="left:18px;top:44px;width:240px;height:238px;border-radius:10px"><div class="a" style="left:13px;top:14px;font-size:10px">Design Thinking</div><div class="a dt" style="left:13px;top:38px;width:214px;height:88px;filter:brightness(.85)"></div><div class="a" style="left:13px;top:131px;width:130px;height:20px;background:repeating-linear-gradient(90deg,#f98c52 0 43px,transparent 43px 47px)"></div><div class="a" style="left:13px;top:160px;font-size:7.5px;line-height:15px">&#8613; &nbsp;&nbsp;Uploaded : 12.3.2024<br>&#8987; &nbsp;&nbsp;Deadline : <span style="color:#f44">15.3.2024</span></div><div class="av" style="left:13px;top:199px;width:18px;height:18px"></div><div class="a" style="left:40px;top:203px;font-size:7.5px">Daisy Kuhn</div></div>
  <div class="card" style="left:18px;top:291px;width:240px;height:238px;border-radius:10px"><div class="a" style="left:13px;top:14px;font-size:10px">Figma UI UX Design</div><div class="a" style="left:13px;top:38px;width:214px;height:88px;background:linear-gradient(90deg,#2a2622,#5a5a60 30%,#cfd3da 50%,#3a3a40)"></div><div class="a" style="left:13px;top:131px;width:130px;height:20px;background:repeating-linear-gradient(90deg,#f98c52 0 43px,transparent 43px 47px)"></div><div class="a" style="left:13px;top:160px;font-size:7.5px;line-height:15px">&#8613; &nbsp;&nbsp;Uploaded : 12.3.2024<br>&#8987; &nbsp;&nbsp;Deadline : <span style="color:#f44">15.3.2024</span></div><div class="av" style="left:13px;top:199px;width:18px;height:18px"></div><div class="a" style="left:40px;top:203px;font-size:7.5px">Phillip Dare</div></div>
  <div class="card" style="left:18px;top:541px;width:240px;height:141px;border-radius:10px"><div class="a" style="left:13px;top:14px;font-size:10px">Canva Artificial Intellegent</div><div class="a" style="left:13px;top:36px;width:130px;height:20px;background:repeating-linear-gradient(90deg,#f98c52 0 43px,transparent 43px 47px)"></div><div class="a" style="left:13px;top:65px;font-size:7.5px;line-height:15px">&#8613; &nbsp;&nbsp;Uploaded : 12.3.2024<br>&#8987; &nbsp;&nbsp;Deadline : <span style="color:#f44">15.3.2024</span></div><div class="av" style="left:13px;top:104px;width:18px;height:18px"></div><div class="a" style="left:40px;top:108px;font-size:7.5px">Nellie McClure</div></div>
 </div>
 <div class="card" style="left:647px;top:178px;width:279px;height:700px">
  <div class="a" style="left:18px;top:14px;font-size:14px">To Do</div><div class="a" style="left:240px;top:12px;font-size:12px">&middot;&middot;&middot;</div>
  <div class="card" style="left:18px;top:44px;width:240px;height:143px;border-radius:10px"><div class="a" style="left:13px;top:14px;font-size:10px">Adobe Illustrator</div><div class="a" style="left:13px;top:36px;width:130px;height:20px;background:repeating-linear-gradient(90deg,#f98c52 0 43px,transparent 43px 47px)"></div><div class="a" style="left:13px;top:65px;font-size:7.5px;line-height:15px">&#8613; &nbsp;&nbsp;Uploaded : 12.3.2024<br>&#8987; &nbsp;&nbsp;Deadline : <span style="color:#f44">15.3.2024</span></div><div class="av" style="left:13px;top:104px;width:18px;height:18px"></div><div class="a" style="left:40px;top:108px;font-size:7.5px">Stella Toy</div></div>
  <div class="card" style="left:18px;top:197px;width:240px;height:238px;border-radius:10px"><div class="a" style="left:13px;top:14px;font-size:10px">Public Speaking</div><div class="a ppl" style="left:13px;top:38px;width:214px;height:88px;filter:saturate(.7)"></div><div class="a" style="left:13px;top:131px;width:130px;height:20px;background:repeating-linear-gradient(90deg,#f98c52 0 43px,transparent 43px 47px)"></div><div class="a" style="left:13px;top:160px;font-size:7.5px;line-height:15px">&#8613; &nbsp;&nbsp;Uploaded : 12.3.2024<br>&#8987; &nbsp;&nbsp;Deadline : <span style="color:#f44">15.3.2024</span></div><div class="av" style="left:13px;top:199px;width:18px;height:18px"></div><div class="a" style="left:40px;top:203px;font-size:7.5px">Heather Sipes-Toy</div></div>
  <div class="card" style="left:18px;top:445px;width:240px;height:238px;border-radius:10px"><div class="a" style="left:13px;top:14px;font-size:10px">HTML &amp; CSS Junior</div><div class="a code" style="left:13px;top:38px;width:214px;height:88px"></div><div class="a" style="left:13px;top:131px;width:130px;height:20px;background:repeating-linear-gradient(90deg,#f98c52 0 43px,transparent 43px 47px)"></div><div class="a" style="left:13px;top:160px;font-size:7.5px;line-height:15px">&#8613; &nbsp;&nbsp;Uploaded : 12.3.2024<br>&#8987; &nbsp;&nbsp;Deadline : <span style="color:#f44">15.3.2024</span></div><div class="av" style="left:13px;top:199px;width:18px;height:18px"></div><div class="a" style="left:40px;top:203px;font-size:7.5px">Horace Rau</div></div>
 </div>
 <div class="card" style="left:948px;top:178px;width:279px;height:700px">
  <div class="a" style="left:18px;top:14px;font-size:14px">Completed</div><div class="a" style="left:240px;top:12px;font-size:12px">&middot;&middot;&middot;</div>
  <div class="card" style="left:18px;top:44px;width:240px;height:238px;border-radius:10px"><div class="a" style="left:13px;top:14px;font-size:10px">Flutter Android Basic</div><div class="a code" style="left:13px;top:38px;width:214px;height:88px;filter:grayscale(.7)"></div><div class="a" style="left:13px;top:131px;width:130px;height:20px;background:repeating-linear-gradient(90deg,#f98c52 0 43px,transparent 43px 47px)"></div><div class="a" style="left:13px;top:160px;font-size:7.5px;line-height:15px">&#8613; &nbsp;&nbsp;Uploaded : 12.3.2024<br>&#8987; &nbsp;&nbsp;Deadline : <span style="color:#f44">15.3.2024</span></div><div class="avf" style="left:13px;top:199px;width:18px;height:18px"></div><div class="a" style="left:40px;top:203px;font-size:7.5px">Kari Balistreri</div></div>
  <div class="card" style="left:18px;top:291px;width:240px;height:143px;border-radius:10px"><div class="a" style="left:13px;top:14px;font-size:10px">Phython Basic Junior</div><div class="a" style="left:13px;top:36px;width:130px;height:20px;background:repeating-linear-gradient(90deg,#f98c52 0 43px,transparent 43px 47px)"></div><div class="a" style="left:13px;top:65px;font-size:7.5px;line-height:15px">&#8613; &nbsp;&nbsp;Uploaded : 12.3.2024<br>&#8987; &nbsp;&nbsp;Deadline : <span style="color:#f44">15.3.2024</span></div><div class="avf" style="left:13px;top:104px;width:18px;height:18px"></div><div class="a" style="left:40px;top:108px;font-size:7.5px">Mona Towne</div></div>
  <div class="card" style="left:18px;top:445px;width:240px;height:238px;border-radius:10px"><div class="a" style="left:13px;top:14px;font-size:10px">Cyber Security Junior</div><div class="a code2" style="left:13px;top:38px;width:214px;height:88px;filter:blur(1px)"></div><div class="a" style="left:13px;top:131px;width:130px;height:20px;background:repeating-linear-gradient(90deg,#f98c52 0 43px,transparent 43px 47px)"></div><div class="a" style="left:13px;top:160px;font-size:7.5px;line-height:15px">&#8613; &nbsp;&nbsp;Uploaded : 12.3.2024<br>&#8987; &nbsp;&nbsp;Deadline : <span style="color:#f44">15.3.2024</span></div><div class="av" style="left:13px;top:199px;width:18px;height:18px"></div><div class="a" style="left:40px;top:203px;font-size:7.5px">Omar MacGyver</div></div>
 </div>
</div>

<!-- Phones -->
<div class="phone" style="left:228px;top:3250px;transform:rotate(2.5deg);transform-origin:0 0">
 <div class="in"><div class="sc">
  <div class="notch" style="left:130px;top:22px"></div>
  <svg class="a" style="left:21px;top:46px;width:36px;height:36px"><use href="#globe"/></svg>
  <svg class="i" style="left:24px;top:140px;width:30px;height:30px"><use href="#grid"/></svg>
  <svg class="i" style="left:24px;top:206px;width:30px;height:30px"><use href="#book"/></svg>
  <div class="a" style="left:17px;top:262px;width:44px;height:44px;border-radius:10px;background:#efefef"></div>
  <svg class="i" style="left:24px;top:269px;width:30px;height:30px"><use href="#clip"/></svg><div class="a" style="left:46px;top:265px;width:9px;height:9px;border-radius:50%;background:#fa8a4c"></div>
  <svg class="i" style="left:24px;top:333px;width:30px;height:30px"><use href="#user"/></svg>
  <svg class="i" style="left:24px;top:690px;width:30px;height:30px"><use href="#bell"/></svg>
  <svg class="i" style="left:24px;top:754px;width:30px;height:30px"><use href="#help"/></svg>
  <svg class="i" style="left:24px;top:818px;width:30px;height:30px"><use href="#gear"/></svg>
  <div class="avf" style="left:22px;top:880px;width:34px;height:34px"></div>
  <div class="a" style="left:78px;top:0;width:1px;height:1000px;background:#eee"></div>
  <div class="a man" style="left:86px;top:60px;width:260px;height:176px;border-radius:14px"></div>
  <div class="a" style="left:94px;top:268px;font-size:21px;white-space:nowrap">Data Analytics Junior</div>
  <div class="a" style="left:94px;top:312px;font-size:15px;white-space:nowrap">&#9707; 27 | &#9636; 277 | &#9719;</div>
  <div class="a" style="left:94px;top:348px;font-size:14px;white-space:nowrap">&#8635; &nbsp;Last Updated 24 April 2024</div>
  <div class="a" style="left:94px;top:383px;font-size:14px;white-space:nowrap">&#9737; &nbsp;English &nbsp;&#9783; &nbsp;English</div>
  <div class="a" style="left:94px;top:416px;width:260px;height:1px;background:#e5e5e5"></div>
  <div class="a" style="left:96px;top:436px;font-size:13px">Instructor</div>
  <div class="avf" style="left:200px;top:428px;width:30px;height:30px"></div>
  <div class="a" style="left:96px;top:503px;font-size:13px">Certificates</div>
  <div class="a" style="left:198px;top:485px;font-size:12px;line-height:18px">Get Digital<br>certificate<br>entire course</div>
  <div class="a" style="left:90px;top:545px;width:270px;height:105px;background:linear-gradient(180deg,#fff,#fde0cc)"></div>
  <div class="a g" style="left:94px;top:595px;font-size:13px">Description</div>
  <div class="a" style="left:94px;top:630px;font-size:11px;color:#fa8a4c">view more</div>
  <div class="a" style="left:198px;top:560px;font-size:12px;line-height:18px;color:#888">The problem<br>Most data<br>science, and<br>miss a critical<br>They don't</div>
  <div class="a" style="left:94px;top:665px;font-size:17px;line-height:25px;white-space:nowrap">Section 2 : Introduction to Data<br>Analytics</div>
  <div class="a g" style="left:94px;top:722px;font-size:12px">0/5 &nbsp;| &nbsp;22min</div>
  <div class="a" style="left:90px;top:752px;width:270px;height:1px;background:#e5e5e5"></div>
  <div class="a" style="left:94px;top:770px;font-size:17px;line-height:25px;white-space:nowrap">Section 3 : Setting up the<br>Environment</div>
  <div class="a g" style="left:94px;top:826px;font-size:12px">0/9 &nbsp;| &nbsp;35min</div>
  <div class="a" style="left:94px;top:872px;font-size:17px;white-space:nowrap">Section 4 : Python Basics</div>
 </div></div>
</div>

<div class="phone" style="left:777px;top:3360px;transform:rotate(-4deg);transform-origin:0 0">
 <div class="in"><div class="sc">
  <div class="notch" style="left:128px;top:26px"></div>
  <svg class="a" style="left:14px;top:90px;width:36px;height:36px"><use href="#globe"/></svg>
  <div class="a" style="left:56px;top:98px;font-size:21px">My Course</div>
  <div class="a" style="left:300px;top:88px;font-size:11px;font-weight:bold">View All</div>
  <div class="card" style="left:90px;top:140px;width:130px;height:220px"><div class="a ux" style="left:6px;top:6px;width:118px;height:130px;border-radius:8px"></div><div class="a" style="left:8px;top:144px;font-size:15px">UI UX<br>Design</div><div class="btn" style="left:6px;top:180px;width:118px;height:30px"></div></div>
  <div class="card" style="left:228px;top:135px;width:130px;height:222px"><div class="a ux" style="left:6px;top:6px;width:118px;height:130px;border-radius:8px"></div><div class="a" style="left:8px;top:146px;font-size:15px;line-height:22px">HTML &amp; CSS<br>Junior</div><div class="btn" style="left:6px;top:190px;width:118px;height:28px;font-size:11px;line-height:28px">&#9707;5 &nbsp;&#9636;4 &nbsp;&#9719;2 hr</div></div>
  <div class="a" style="left:56px;top:410px;font-size:21px;white-space:nowrap">Latest Course Updated</div>
  <div class="a" style="left:300px;top:402px;font-size:11px;font-weight:bold">View All</div>
  <div class="card" style="left:90px;top:450px;width:120px;height:270px"><div class="a" style="left:6px;top:6px;width:108px;height:150px;border-radius:8px;background:linear-gradient(180deg,#1a2a44,#3a5a80)"></div><div class="a" style="left:8px;top:164px;font-size:18px">$ 80.99</div><div class="btn" style="left:6px;top:224px;width:108px;height:30px"></div></div>
  <div class="card" style="left:220px;top:442px;width:125px;height:272px"><div class="a" style="left:6px;top:6px;width:113px;height:150px;border-radius:8px;background:linear-gradient(160deg,#2a2c30,#dfe6ea 50%,#6a7a84)"></div><div class="a" style="left:8px;top:164px;font-size:18px">$ 80.99</div><div class="a" style="left:8px;top:190px;font-size:13px;line-height:18px">Software<br>Enginger Basic</div><div class="btn" style="left:6px;top:233px;width:113px;height:32px;font-size:11px;line-height:32px">Buy Course</div></div>
  <div class="a" style="left:56px;top:745px;font-size:21px;white-space:nowrap">Popular Course Available</div>
  <div class="a" style="left:300px;top:737px;font-size:11px;font-weight:bold">View All</div>
  <div class="card" style="left:220px;top:780px;width:125px;height:270px"><div class="a" style="left:6px;top:6px;width:113px;height:150px;border-radius:8px;background:linear-gradient(180deg,#e8eef6,#b8c8e0)"></div><div class="a" style="left:8px;top:164px;font-size:18px">$ 80.99</div></div>
 </div></div>
</div>

<div class="phone" style="left:491px;top:3454px;transform:rotate(2.5deg);transform-origin:0 0">
 <div class="in"><div class="sc">
  <div class="notch" style="left:130px;top:24px"></div>
  <svg class="a" style="left:18px;top:63px;width:36px;height:36px"><use href="#globe"/></svg>
  <div class="a" style="left:14px;top:140px;width:44px;height:44px;border-radius:10px;background:#efefef"></div>
  <svg class="i" style="left:21px;top:147px;width:30px;height:30px"><use href="#grid"/></svg>
  <svg class="i" style="left:21px;top:212px;width:30px;height:30px"><use href="#book"/></svg>
  <svg class="i" style="left:21px;top:278px;width:30px;height:30px"><use href="#clip"/></svg><div class="a" style="left:43px;top:274px;width:9px;height:9px;border-radius:50%;background:#fa8a4c"></div>
  <svg class="i" style="left:21px;top:341px;width:30px;height:30px"><use href="#user"/></svg>
  <svg class="i" style="left:21px;top:700px;width:30px;height:30px"><use href="#bell"/></svg>
  <div class="a" style="left:72px;top:0;width:1px;height:1000px;background:#eee"></div>
  <div class="a" style="left:80px;top:80px;font-size:21px;white-space:nowrap">Course you may like !</div>
  <div class="a g" style="left:80px;top:110px;font-size:12px;white-space:nowrap">Let's learn something new today!</div>
  <div class="a" style="left:300px;top:138px;font-size:11px;font-weight:bold">View All</div>
  <div class="card" style="left:80px;top:160px;width:155px;height:330px">
   <div class="a ux" style="left:6px;top:10px;width:143px;height:152px;border-radius:8px"></div>
   <div class="a" style="left:6px;top:172px;font-size:16px;white-space:nowrap">Figma UI UX Design</div>
   <div class="a" style="left:6px;top:200px;width:145px;font-size:9.5px;line-height:14px;color:#444">UI design adalah proses merancang antarmuka pengguna untuk aplikasi atau situs web, dengan fokus pada tampilan visual dan interaksi yang intuitif ...</div>
   <div class="av" style="left:6px;top:285px;width:30px;height:30px"></div><div class="a" style="left:44px;top:293px;font-size:11.5px">Christopher Rau</div>
  </div>
  <div class="card" style="left:244px;top:165px;width:140px;height:330px">
   <div class="a dt" style="left:6px;top:10px;width:134px;height:152px;border-radius:8px"></div>
   <div class="a" style="left:6px;top:172px;font-size:16px;white-space:nowrap">Design Thinking</div>
   <div class="a" style="left:6px;top:200px;width:140px;font-size:9.5px;line-height:14px;color:#444">Design thinking adalah metode pemecahan masalah yang berpusat pada pengguna, dengan pendekatan iteratif menggabungkan empati,</div>
   <div class="avf" style="left:6px;top:285px;width:30px;height:30px"></div><div class="a" style="left:44px;top:293px;font-size:11.5px;white-space:nowrap">Caroline Larson</div>
  </div>
  <div class="a" style="left:80px;top:512px;font-size:19px;white-space:nowrap">Upcoming Events</div>
  <div class="a" style="left:357px;top:545px;width:3px;height:80px;background:#fa8a4c"></div>
  <div class="card" style="left:80px;top:545px;width:270px;height:64px;border-radius:12px"><div class="a" style="left:8px;top:10px;width:44px;height:44px;border-radius:8px;background:#ececec"></div><div class="a" style="left:19px;top:18px;width:22px;height:28px;background:#e44d26;clip-path:polygon(0 0,100% 0,90% 85%,50% 100%,10% 85%);color:#fff;font-weight:bold;text-align:center;line-height:28px">5</div><div class="a" style="left:65px;top:12px;font-size:13px">HTML &amp; CSS Basic</div><div class="a g" style="left:65px;top:40px;font-size:11px">&bull; Code &nbsp;&nbsp;&bull; 10:00 am</div></div>
  <div class="card" style="left:80px;top:618px;width:270px;height:64px;border-radius:12px"><div class="a" style="left:8px;top:10px;width:44px;height:44px;border-radius:8px;background:#0c0c0e"></div><div class="a" style="left:23px;top:19px;width:14px;height:24px;background:linear-gradient(#f24e1e 0 33%,#a259ff 33% 66%,#0acf83 66%);border-radius:4px"></div><div class="a" style="left:65px;top:12px;font-size:13px">UI UX Design</div><div class="a g" style="left:65px;top:40px;font-size:11px">&bull; Design &nbsp;&nbsp;&bull; 16:00 pm</div></div>
  <div class="card" style="left:80px;top:691px;width:270px;height:64px;border-radius:12px"><div class="a" style="left:8px;top:10px;width:44px;height:44px;border-radius:8px;background:#2fd3b4"></div><div class="a" style="left:65px;top:12px;font-size:13px">Data Analytics Junior</div><div class="a g" style="left:65px;top:40px;font-size:11px">&bull; Database &nbsp;&bull; 21:00 pm</div></div>
 </div></div>
</div>
</body></html>
